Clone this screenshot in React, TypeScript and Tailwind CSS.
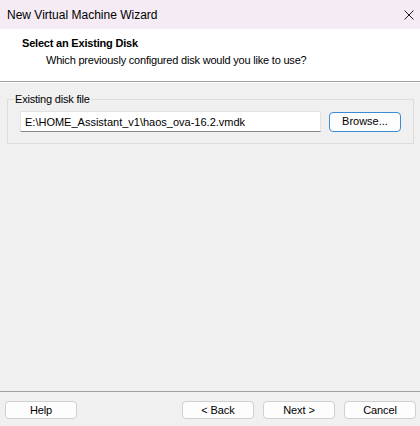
import React, { useState } from 'react';

const font = { fontFamily: '"Liberation Sans", Arial, sans-serif' };

const DlgButton: React.FC<{ label: string; className?: string }> = ({ label, className }) => (
  <button
    type="button"
    className={
      'h-[18px] w-[72px] rounded-[4px] border border-[#d0d0d0] bg-[#fdfdfd] text-[11px] tracking-[-0.1px] leading-none text-black ' +
      (className || '')
    }
  >
    {label}
  </button>
);

const App: React.FC = () => {
  const [path, setPath] = useState<string>('E:\\HOME_Assistant_v1\\haos_ova-16.2.vmdk');

  return (
    <div className="w-[420px] h-[426px] flex flex-col bg-[#f0f0f0] text-black" style={font}>
      {/* title bar */}
      <div className="h-[29px] flex items-center justify-between bg-[#f4ebf4] pl-[7px] pr-[6px]">
        <span className="text-[12px]">New Virtual Machine Wizard</span>
        <svg width="10" height="10" viewBox="0 0 10 10">
          <path d="M0.5 0.5 L9.5 9.5 M9.5 0.5 L0.5 9.5" stroke="#1a1a1a" strokeWidth="1" />
        </svg>
      </div>

      {/* header */}
      <div className="h-[53px] bg-white border-b border-[#a0a0a0] pt-[7px] pl-[22px]">
        <div className="text-[11px] tracking-[-0.2px] font-bold leading-[15px]">Select an Existing Disk</div>
        <div className="text-[11px] tracking-[-0.2px] leading-[15px] mt-[2px] pl-[24px]">
          Which previously configured disk would you like to use?
        </div>
      </div>

      {/* body */}
      <div className="flex-1 px-[7px] pt-[9px] border-t border-white">
        <fieldset className="border border-[#dcdcdc] rounded-none px-[12px] pb-[11px] pt-[4px] m-0">
          <legend className="text-[11px] tracking-[-0.2px] leading-[15px] px-[1px] -ml-[6px]">Existing disk file</legend>
          <div className="flex items-center gap-[8px]">
            <input
              type="text"
              value={path}
              onChange={(e) => setPath(e.target.value)}
              className="w-[301px] h-[21px] bg-white border border-[#e3e3e3] border-b-[#8a8a8a] px-[4px] text-[11px] outline-none"
              style={font}
            />
            <button
              type="button"
              className="h-[20px] w-[72px] rounded-[4px] border border-[#3a8ad6] bg-[#fdfdfd] text-[11px] leading-none"
            >
              Browse...
            </button>
          </div>
        </fieldset>
      </div>

      {/* footer */}
      <div className="h-[35px] border-t border-[#a0a0a0] flex items-start pt-[9px] pl-[5px]">
        <DlgButton label="Help" />
        <div className="flex-1" />
        <div className="flex gap-[9px] pr-[4px]">
          <DlgButton label="< Back" />
          <DlgButton label="Next >" />
          <DlgButton label="Cancel" />
        </div>
      </div>
    </div>
  );
};

export default App;
